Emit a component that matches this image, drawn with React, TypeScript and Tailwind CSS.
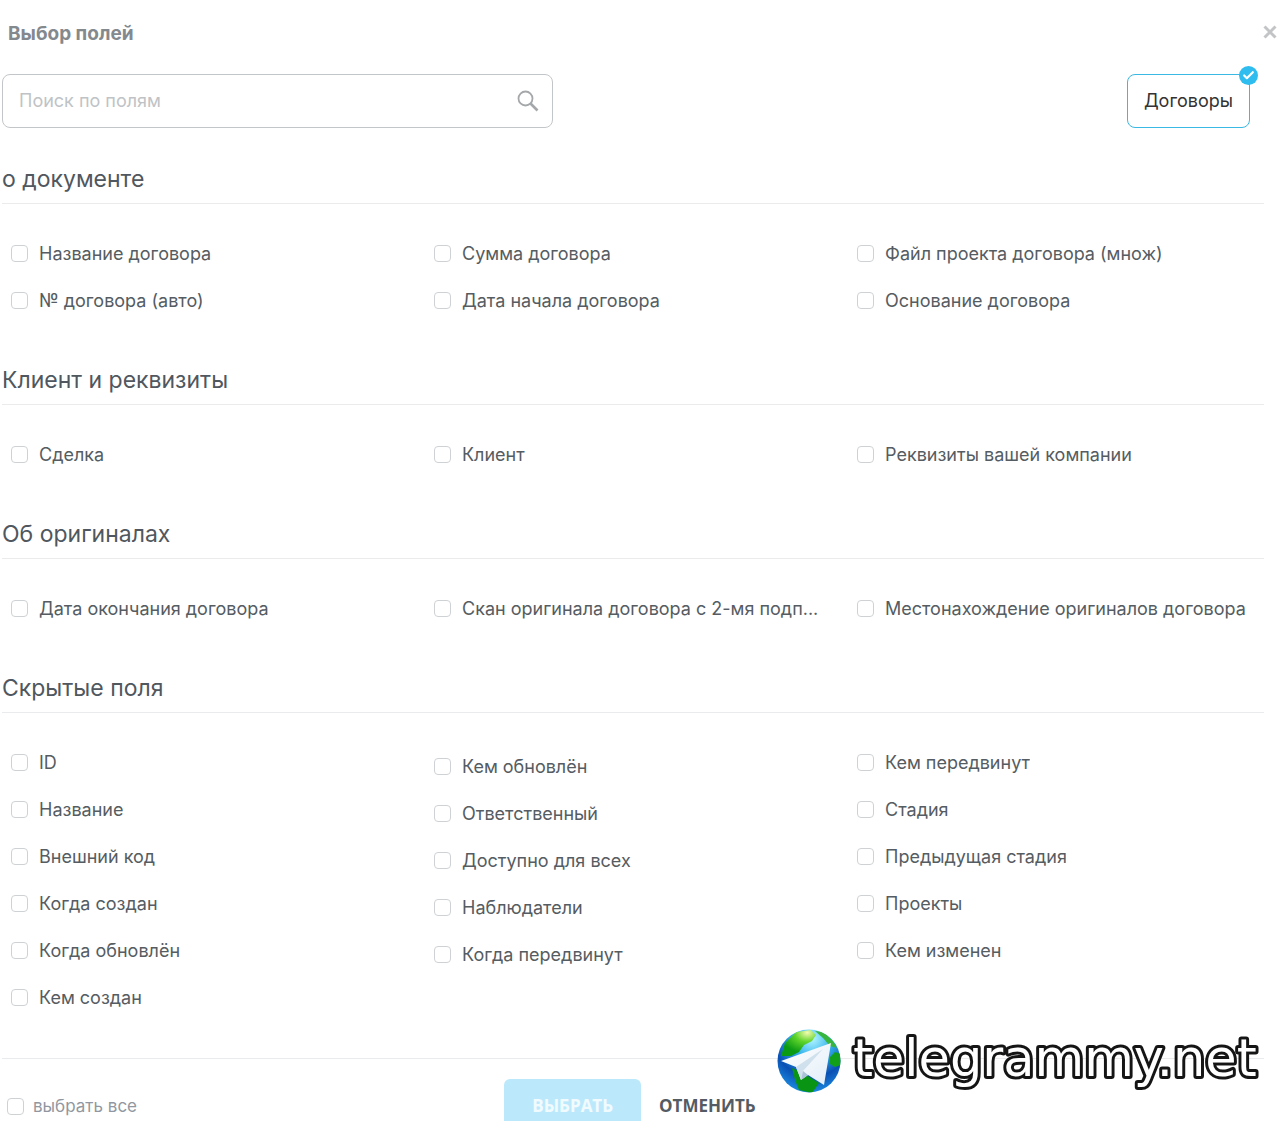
import React from 'react';
import { Check } from 'lucide-react';

type Section = {
  title: string;
  columns: string[][];
};

const sections: Section[] = [
  {
    title: 'о документе',
    columns: [
      ['Название договора', '№ договора (авто)'],
      ['Сумма договора', 'Дата начала договора'],
      ['Файл проекта договора (множ)', 'Основание договора'],
    ],
  },
  {
    title: 'Клиент и реквизиты',
    columns: [['Сделка'], ['Клиент'], ['Реквизиты вашей компании']],
  },
  {
    title: 'Об оригиналах',
    columns: [
      ['Дата окончания договора'],
      ['Скан оригинала договора с 2-мя подп...'],
      ['Местонахождение оригиналов договора'],
    ],
  },
  {
    title: 'Скрытые поля',
    columns: [
      ['ID', 'Название', 'Внешний код', 'Когда создан', 'Когда обновлён', 'Кем создан'],
      ['Кем обновлён', 'Ответственный', 'Доступно для всех', 'Наблюдатели', 'Когда передвинут'],
      ['Кем передвинут', 'Стадия', 'Предыдущая стадия', 'Проекты', 'Кем изменен'],
    ],
  },
];

const Checkbox: React.FC = () => (
  <input
    type="checkbox"
    className="h-[17px] w-[17px] shrink-0 appearance-none rounded-[4px] border border-[#cfd2d4] bg-white checked:border-[#2fc6f6] checked:bg-[#2fc6f6]"
  />
);

const FieldSection: React.FC<{ section: Section }> = ({ section }) => (
  <section className="mb-10">
    <h2 className="mr-4 ml-[2px] border-b border-[#e9ebec] pb-2 text-[23px] leading-8 text-[#50575e]">
      {section.title}
    </h2>
    <div className="mt-[26px] grid grid-cols-3 pl-[11px]">
      {section.columns.map((fields, index) => (
        // the middle column of a long list starts a little lower
        <ul key={index} className={fields.length === 5 && index === 1 ? 'min-w-0 pt-1' : 'min-w-0'}>
          {fields.map((field) => (
            <li key={field} className="h-[47px]">
              <label className="flex h-full items-center gap-[11px] pr-5 text-lg text-[#555c62]">
                <Checkbox />
                <span className="truncate">{field}</span>
              </label>
            </li>
          ))}
        </ul>
      ))}
    </div>
  </section>
);

const Watermark: React.FC = () => (
  <div className="pointer-events-none absolute right-[13px] bottom-[28px] flex items-center gap-2">
    <svg className="h-16 w-16" viewBox="0 0 64 64" aria-hidden="true">
      <defs>
        <radialGradient id="sea" cx="0.55" cy="0.15" r="0.85">
          <stop offset="0" stopColor="#b4f6ff" />
          <stop offset="0.35" stopColor="#35b4ee" />
          <stop offset="0.7" stopColor="#0a50b4" />
          <stop offset="1" stopColor="#1c8be0" />
        </radialGradient>
        <radialGradient id="land" cx="0.75" cy="0.1" r="0.8">
          <stop offset="0" stopColor="#f4fbb0" />
          <stop offset="0.45" stopColor="#5fd42a" />
          <stop offset="1" stopColor="#0a9a14" />
        </radialGradient>
        <linearGradient id="wing" x1="0" y1="0" x2="1" y2="1">
          <stop offset="0" stopColor="#ffffff" />
          <stop offset="1" stopColor="#e2eef8" />
        </linearGradient>
        <clipPath id="globe">
          <circle cx="32" cy="32" r="31.5" />
        </clipPath>
      </defs>
      <g clipPath="url(#globe)">
        <rect width="64" height="64" fill="url(#sea)" />
        <path d="M4 27 8 14 19 3 34 1 39 6 35 12 27 16 22 23 14 27Z" fill="url(#land)" />
        <path d="M38 2 47 3 56 12 60 19 53 17 46 9Z" fill="#37b53c" />
        <path d="M53 28 58 23 64 25 64 36 58 38 53 35Z" fill="#12a01a" />
        <path d="M15 39 24 43 34 49 42 54 35 64 22 61 18 51Z" fill="#0a9414" />
      </g>
      <path d="M54 14 4 32 19 38 24 51 31 46 47 56Z" fill="url(#wing)" />
      <path d="M19 38 46 20 26 42 24 51Z" fill="#d0e0ec" />
      <path d="M26 42 31 46 24 51Z" fill="#a9c3d8" />
    </svg>
    <svg className="h-16 w-[418px] overflow-visible" viewBox="0 0 418 64">
      <text
        x="4"
        y="47"
        className="fill-white stroke-[#151515] font-['DejaVu_Sans'] text-[51px] [paint-order:stroke]"
        strokeWidth="6"
        strokeLinejoin="round"
      >
        telegrammy.net
      </text>
    </svg>
  </div>
);

const App: React.FC = () => (
  <main className="relative bg-white font-[Inter,'Liberation_Sans',sans-serif] text-[#555c62]">
    <header className="flex h-[74px] items-start justify-between pr-[3px] pl-2">
      <h1 className="pt-[22px] text-[19px] leading-6 font-bold text-[#84898e]">Выбор полей</h1>
      <button type="button" aria-label="Закрыть" className="mt-[25px]">
        <svg className="h-[14px] w-[14px]" viewBox="0 0 14 14" stroke="#c2c4c6" strokeWidth="3">
          <path d="M1.5 1.5 12.5 12.5M12.5 1.5 1.5 12.5" />
        </svg>
      </button>
    </header>

    <div className="mb-[35px] flex items-start justify-between pr-[30px] pl-[2px]">
      <div className="flex h-[54px] w-[551px] items-center rounded-lg border border-[#c3c6c8] pr-[13px] pl-4">
        <input
          type="text"
          aria-label="Поиск по полям"
          placeholder="Поиск по полям"
          className="min-w-0 flex-1 text-lg outline-none placeholder:text-[#bfc3c6]"
        />
        <svg className="h-[22px] w-[22px]" viewBox="0 0 22 22" fill="none" stroke="#a5a8aa">
          <circle cx="8.5" cy="8.5" r="7" strokeWidth="1.8" />
          <path d="M13.5 13.5 20.5 20.5" strokeWidth="2.6" />
        </svg>
      </div>
      <button
        type="button"
        className="relative h-[54px] rounded-lg border border-[#39b9e3] px-4 text-lg text-[#333]"
      >
        Договоры
        <span className="absolute -top-[9px] -right-[9px] flex h-[19px] w-[19px] items-center justify-center rounded-full bg-[#2fbdef] text-white">
          <Check size={13} strokeWidth={4} />
        </span>
      </button>
    </div>

    {sections.map((section) => (
      <FieldSection key={section.title} section={section} />
    ))}

    <footer className="-mt-[3px]">
      <div className="mr-4 ml-[2px] h-px bg-[#e9ebec]" />
      <div className="mr-[2px] grid grid-cols-[1fr_auto_1fr] items-start">
        <label className="flex items-center gap-[9px] pt-[35px] pl-[7px] text-[17px] leading-6 text-[#9197a0]">
          <Checkbox />
          выбрать все
        </label>
        <div className="flex pt-5 font-['Open_Sans'] text-[17px] leading-[22px] font-bold">
          <button type="button" className="rounded-t-md bg-[#bbe9fb] px-7 pt-4 pb-1 text-white/80">
            ВЫБРАТЬ
          </button>
          <button type="button" className="px-[18px] pt-4 pb-1 text-[#555b63]">
            ОТМЕНИТЬ
          </button>
        </div>
      </div>
    </footer>

    <Watermark />
  </main>
);

export default App;
